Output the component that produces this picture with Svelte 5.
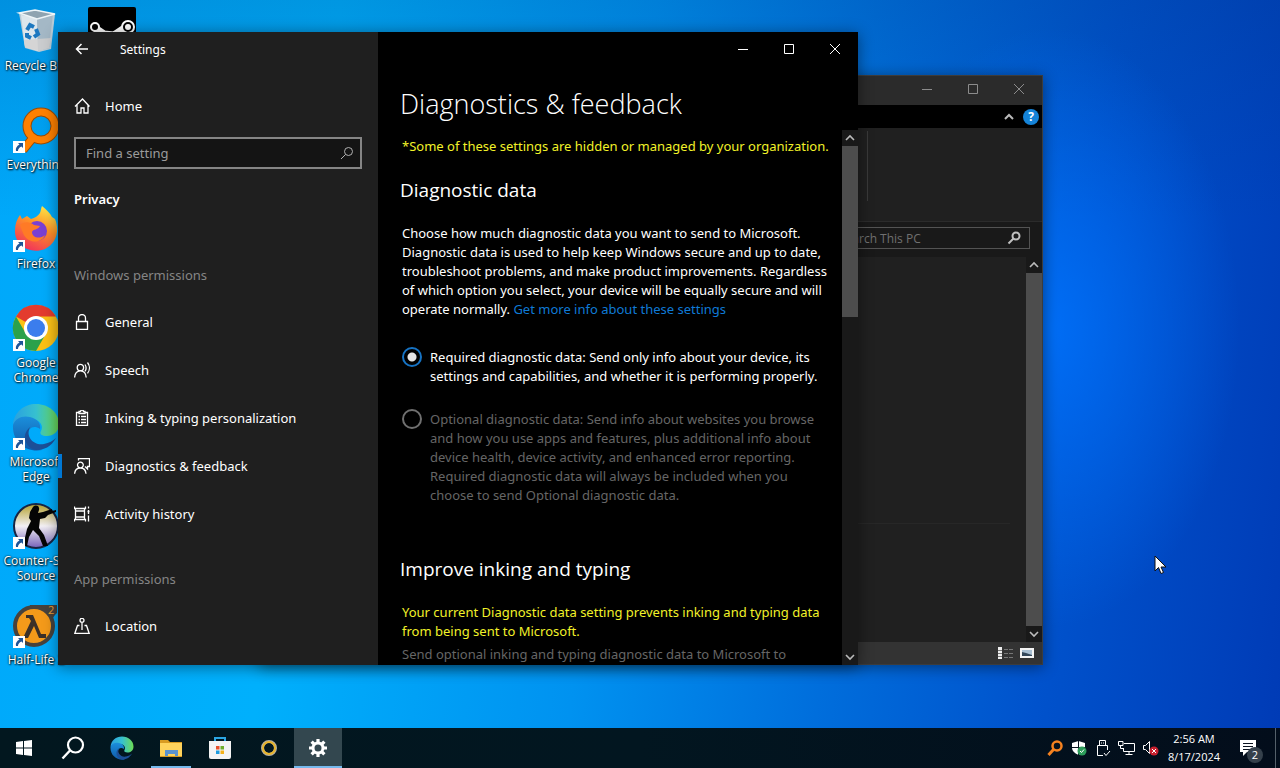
<script>
  let search = '';
  let level = 'required';
  let selected = 'Diagnostics & feedback';

  const shortcuts = [
    { id: 'bin', label: 'Recycle Bin', link: false },
    { id: 'everything', label: 'Everything', link: true },
    { id: 'firefox', label: 'Firefox', link: true },
    { id: 'chrome', label: 'Google\nChrome', link: true },
    { id: 'edge', label: 'Microsoft\nEdge', link: true },
    { id: 'cs', label: 'Counter-Str\nSource', link: true },
    { id: 'hl', label: 'Half-Life 2', link: true },
    { id: 'steam', label: 'Steam', link: false }
  ];

  const windowsItems = [
    {
      label: 'General',
      path: 'M2.5 7.5h11v8h-11zM4.5 7.5V4a3.5 3.5 0 0 1 7 0v3.5'
    },
    {
      label: 'Speech',
      path: 'M3.2 5.500a3.2 3.2 0 1 0 6.4 0a3.2 3.2 0 1 0-6.4 0M.6 15.500c.3-4.200 2.600-6.700 5.800-6.700s5.500 2.500 5.800 6.700M11 2.500c1.300 2 1.300 4.800 0 6.800M13.500.500c2.500 3.200 2.500 7.600 0 10.800'
    },
    {
      label: 'Inking & typing personalization',
      path: 'M5 2.500H2.500v13h11v-13H11M5 3.500v-2h1.500a1.500 1.500 0 0 1 3 0H11v2zM4.500 6.500h1.500M7 6.500h5M4.500 9.500h1.500M7 9.500h5M4.500 12.500h1.500M7 12.500h5'
    },
    {
      label: 'Diagnostics & feedback',
      path: 'M3.500 7a2.900 2.900 0 1 0 5.800 0a2.900 2.900 0 1 0-5.800 0M.600 15.800c.3-3.800 2.300-5.800 5.800-5.800s5.300 2 5.600 5.800M4.500 2.500v-2h11v8h-2v2.500L11 8.500'
    },
    {
      label: 'Activity history',
      path: 'M.500.500v2h11v-2M.500 15.500v-2h11v2M1.500 2.500v11M10.500 2.500v11M1.500 5h9M1.500 11h9M14.500.500v2M14.500 4v4M13.500 5.500h2M14.500 9.500v6'
    }
  ];

  const appItems = [
    {
      label: 'Location',
      path: 'M6 2.300a2 2 0 1 0 4 0a2 2 0 1 0-4 0M8 4.300V12M5.500 7.500h-2L.800 15.500h14.400l-2.700-8h-2'
    }
  ];

  const tasks = [
    { id: 'start', label: 'Start' },
    { id: 'search', label: 'Search' },
    { id: 'edge', label: 'Microsoft Edge' },
    { id: 'explorer', label: 'File Explorer', open: true },
    { id: 'store', label: 'Microsoft Store' },
    { id: 'ring', label: 'Cortana' },
    { id: 'settings', label: 'Settings', open: true, active: true }
  ];
</script>

{#snippet edgeLogo(uid)}
  <defs>
    <linearGradient id="{uid}-a" x1="0" y1="0" x2="1" y2="0">
      <stop offset="0" stop-color="#2aa0e0" />
      <stop offset=".5" stop-color="#36c0d0" />
      <stop offset="1" stop-color="#6ddc52" />
    </linearGradient>
    <linearGradient id="{uid}-b" x1="0" y1="0" x2="0" y2="1">
      <stop offset="0" stop-color="#1b8fdc" />
      <stop offset="1" stop-color="#1059a8" />
    </linearGradient>
  </defs>
  <path d="M1 22C2 9 12 1 24 1c13 0 23 9 23 20 0 8-6 12-12 12-5 0-8-2-6-5 3-5-1-12-10-12C9 16 2 19 1 22z" fill="url(#{uid}-a)" />
  <path d="M1 22c2-7 10-10 17-8 8 2 11 7 10 12-7-5-13 0-12 7 1 7 7 12 14 14C14 50 0 39 1 22z" fill="url(#{uid}-b)" />
  <path d="M18 24c-5 10 4 19 14 17 5-1 9-3 12-6-5 9-12 12-20 12-10-2-16-14-6-23z" fill="#1c4f97" />
{/snippet}

{#snippet shortcutIcon(id)}
  <svg viewBox="0 0 48 48" width="48" height="48" aria-hidden="true">
    {#if id === 'bin'}
      <path d="M7 6l16-3 20 4-4 35-12 3-14-4z" fill="#b9cbd6" />
      <path d="M9 8l16 3 1 33-13-4z" fill="#dce6ec" />
      <path d="M25 11l16-4-4 34-11 3z" fill="#a4b8c6" />
      <path d="M7 6l16-3 20 4-18 5z" fill="#8fa3b0" stroke="#eef4f7" stroke-width="1.500" />
      <path d="M12 33l27-2-2 10-10 3-14-4z" fill="#d3d1d0" opacity=".8" />
      <path d="M15 23l3-5 4 2M24 22l2 5-4 3M19 31l-4-2v-3" fill="none" stroke="#1c78c0" stroke-width="4" />
    {:else if id === 'everything'}
      <path d="M20 33L11 44" stroke="#9a4b05" stroke-width="9" />
      <circle cx="29" cy="20" r="14" fill="none" stroke="#9a4b05" stroke-width="9" />
      <path d="M20 33L11 44" stroke="#ff8000" stroke-width="7" />
      <circle cx="29" cy="20" r="14" fill="none" stroke="#ff8000" stroke-width="7" />
    {:else if id === 'firefox'}
      <defs>
        <linearGradient id="fox" x1=".8" y1="0" x2=".3" y2="1">
          <stop offset="0" stop-color="#fff04a" />
          <stop offset=".45" stop-color="#ff9128" />
          <stop offset="1" stop-color="#f0305c" />
        </linearGradient>
      </defs>
      <path d="M8 10l2 4 5-3 4 3c4-1 7-3 9-6 1-3 1-5 2-7 4 3 8 7 10 11l3 2c5 12 1 25-10 30C18 50 2 40 3 25c0-6 2-11 5-15z" fill="url(#fox)" />
      <circle cx="25" cy="26" r="10" fill="#7a3fd3" />
      <path d="M8 20c5-4 10-3 14 0l6 1c-2 4-7 3-8 6 0 5 7 8 13 3-3 9-18 9-22-2z" fill="#ff7a26" />
    {:else if id === 'chrome'}
      <circle cx="24" cy="24" r="23" fill="#fbc116" />
      <path d="M24 24L4 12.500A23 23 0 0 1 44 12.500H24z" fill="#e33b2e" />
      <path d="M4 12.500A23 23 0 0 0 24 47l10-17.500L14 30z" fill="#2ba14b" />
      <circle cx="24" cy="24" r="12" fill="#fff" />
      <circle cx="24" cy="24" r="9" fill="#3b7ded" />
    {:else if id === 'edge'}
      {@render edgeLogo('desk')}
    {:else if id === 'cs'}
      <defs>
        <linearGradient id="csbg" x1="0" y1="0" x2="0" y2="1">
          <stop offset="0" stop-color="#b3a02c" />
          <stop offset=".5" stop-color="#f3f0f4" />
          <stop offset="1" stop-color="#7560b8" />
        </linearGradient>
      </defs>
      <circle cx="24" cy="24" r="22" fill="url(#csbg)" stroke="#172544" stroke-width="2" />
      <path d="M21 5c3-3 7-1 6 3l-1 3 5-1 9-3v2l4-1v2l-8 3-3 3-5 1-1 9 5 7 4 11h-5l-4-10-6-6-4 7-2 9h-6l1-3 2-1 3-13 4-8-2-3 1-6z" fill="#050505" />
    {:else if id === 'hl'}
      <path d="M18 4h27v8c-4 3-6 8-5 16l-22 8z" fill="#47423d" />
      <circle cx="22" cy="25" r="19" fill="#f49a1a" stroke="#47423d" stroke-width="4" />
      <path d="M14 14h7l8 19h5v4h-7l-5-12-6 12h-5l8-17-2-3h-3z" fill="#3c3028" />
      <text x="36" y="13" font-size="11" fill="#f0a030">2</text>
    {:else if id === 'steam'}
      <rect width="48" height="48" rx="2" fill="#000" />
      <path d="M7 21l9 6 10 1 12-8" stroke="#fff" stroke-width="7" fill="none" />
      <circle cx="7" cy="20" r="4" fill="#000" stroke="#fff" stroke-width="2" />
      <circle cx="40" cy="20" r="6" fill="#000" stroke="#fff" stroke-width="2" />
      <circle cx="40" cy="20" r="3" fill="#fff" />
    {/if}
  </svg>
{/snippet}

{#snippet taskIcon(id)}
  <svg viewBox="0 0 24 24" width="24" height="24" aria-hidden="true">
    {#if id === 'start'}
      <path d="M4 6l7-1v6.500H4zM12 5l8-1v7.500h-8zM4 12.500h7V19l-7-1zM12 12.500h8V20l-8-1z" fill="#fff" />
    {:else if id === 'search'}
      <circle cx="14.500" cy="9" r="7.500" fill="none" stroke="#fff" stroke-width="2.200" />
      <path d="M9 14.500L1.500 22.500" stroke="#fff" stroke-width="2.400" />
    {:else if id === 'edge'}
      <svg viewBox="0 0 48 48" width="24" height="24">{@render edgeLogo('task')}</svg>
    {:else if id === 'explorer'}
      <path d="M1 4h8l2 2h12v15H1z" fill="#d99b22" />
      <path d="M1 7h22v13H1z" fill="#ffd35c" />
      <path d="M6 20v-6h13v6h-3v-2H9v2z" fill="#5b93d0" />
    {:else if id === 'store'}
      <path d="M7 7V2h10v5" fill="none" stroke="#2ba6e3" stroke-width="2" />
      <path d="M1 5h22v16q0 2-2 2H3q-2 0-2-2z" fill="#f4f4f4" />
      <path d="M8 10h3.500v3.500H8z" fill="#e8502b" />
      <path d="M12.500 10H16v3.500h-3.500z" fill="#6fae2b" />
      <path d="M8 14.500h3.500V18H8z" fill="#1e9ce0" />
      <path d="M12.500 14.500H16V18h-3.500z" fill="#f5b21a" />
    {:else if id === 'ring'}
      <circle cx="12" cy="12" r="6.500" fill="none" stroke="#b5b0a4" stroke-width="3" />
      <circle cx="12" cy="12" r="6" fill="none" stroke="#e8b42a" stroke-width="2" />
    {:else}
      <circle cx="12" cy="12" r="5" fill="none" stroke="#fff" stroke-width="3" />
      <path d="M12 3v4M12 17v4M3 12h4M17 12h4M5.600 5.600l2.900 2.900M15.500 15.500l2.900 2.900M5.600 18.400l2.900-2.900M15.500 8.500l2.900-2.900" stroke="#fff" stroke-width="3.200" />
    {/if}
  </svg>
{/snippet}

{#snippet captionButtons()}
  <div class="caption-buttons">
    <button aria-label="Minimize"><svg width="12" height="12"><path d="M1 6.500h10" /></svg></button>
    <button aria-label="Maximize"><svg width="12" height="12"><path d="M1.500 1.500h9v9h-9z" /></svg></button>
    <button aria-label="Close"><svg width="12" height="12"><path d="M1 1l10 10M11 1L1 11" /></svg></button>
  </div>
{/snippet}

{#snippet chevron(up)}
  <svg width="10" height="8" aria-hidden="true"><path d={up ? 'M1 6l4-4 4 4' : 'M1 2l4 4 4-4'} /></svg>
{/snippet}

{#snippet navList(items)}
  <ul class="nav-list">
    {#each items as item}
      <li>
        <button class="nav-item" class:selected={item.label === selected} on:click={() => (selected = item.label)}>
          <svg width="16" height="16" viewBox="0 0 16 16" aria-hidden="true"><path d={item.path} /></svg>
          {item.label}
        </button>
      </li>
    {/each}
  </ul>
{/snippet}

<div class="screen">
  <main class="desktop">
    <div class="shortcuts">
      {#each shortcuts as shortcut}
        <button class="shortcut">
          <span class="shortcut-icon">
            {@render shortcutIcon(shortcut.id)}
            {#if shortcut.link}
              <svg class="link-badge" width="12" height="12" aria-hidden="true">
                <rect width="12" height="12" fill="#fff" />
                <path d="M5 2h5v5L8.500 5.500Q5 7 5 10H3Q2 6 6.500 3.500z" fill="#1f5598" />
              </svg>
            {/if}
          </span>
          <span class="shortcut-label">{shortcut.label}</span>
        </button>
      {/each}
    </div>

    <section class="window explorer" aria-label="This PC">
      <header class="explorer-title">{@render captionButtons()}</header>
      <div class="explorer-tabs">
        <button aria-label="Minimize the Ribbon">{@render chevron(true)}</button>
        <button class="help" aria-label="Help">?</button>
      </div>
      <div class="ribbon"><span class="ribbon-divider"></span></div>
      <div class="address-row">
        <label class="pc-search">
          <input type="text" placeholder="Search This PC" aria-label="Search This PC" />
          <svg width="14" height="14" aria-hidden="true"><circle cx="9" cy="5" r="3.500" /><path d="M6.500 7.500L1.500 12.500" /></svg>
        </label>
      </div>
      <div class="explorer-body">
        <div class="files"><hr /></div>
        <div class="scrollbar">
          <button aria-label="Scroll up">{@render chevron(true)}</button>
          <div class="thumb"></div>
          <button aria-label="Scroll down">{@render chevron(false)}</button>
        </div>
      </div>
      <footer class="status">
        <button aria-label="Details view">
          <svg width="17" height="14">
            <path d="M1 1h4v12H1z" fill="#eee" />
            <path d="M1 4.500h4M1 7.500h4M1 10.500h4" stroke="#777" />
            <path d="M7 3.500h4M12 3.500h4M7 7.500h4M12 7.500h4M7 11.500h4M12 11.500h4" stroke="#777" />
          </svg>
        </button>
        <button aria-label="Large icons view">
          <svg width="14" height="12">
            <path d="M0 1h14v10H0z" fill="#f4f4f4" />
            <path d="M2 3h10v6H2z" fill="#a9bfd2" />
            <path d="M2 5l4 1 6 2v1H2z" fill="#33475a" />
          </svg>
        </button>
      </footer>
    </section>

    <section class="window settings" aria-label="Settings">
      <aside class="sidebar">
        <header class="settings-title">
          <button class="back" aria-label="Back"><svg width="14" height="12"><path d="M13 6H1.500M6.500 1l-5 5 5 5" /></svg></button>
          <span>Settings</span>
        </header>
        <button class="nav-item">
          <svg width="16" height="16" viewBox="0 0 16 16" aria-hidden="true">
            <path d="M1 8.500L8.500 1l7 7.500M3 7v8h4v-5h3v5h4V7" />
          </svg>
          Home
        </button>
        <label class="find">
          <input type="text" placeholder="Find a setting" aria-label="Find a setting" bind:value={search} />
          <svg width="14" height="14" aria-hidden="true"><circle cx="8.500" cy="5.500" r="4" /><path d="M5.500 8.500L1 13" /></svg>
        </label>
        <h2 class="category">Privacy</h2>
        <h3 class="group">Windows permissions</h3>
        {@render navList(windowsItems)}
        <h3 class="group app-group">App permissions</h3>
        {@render navList(appItems)}
      </aside>

      <div class="page">
        <header class="page-title">{@render captionButtons()}</header>
        <h1>Diagnostics &amp; feedback</h1>
        <div class="page-scroll">
          <div class="page-content">
            <p class="notice">*Some of these settings are hidden or managed by your organization.</p>
            <h2>Diagnostic data</h2>
            <p class="intro">
              Choose how much diagnostic data you want to send to Microsoft. Diagnostic data is used to help keep
              Windows secure and up to date, troubleshoot problems, and make product improvements. Regardless of
              which option you select, your device will be equally secure and will operate normally.
              <a href="#info">Get more info about these settings</a>
            </p>
            <label class="option">
              <input type="radio" name="level" value="required" bind:group={level} />
              <span>Required diagnostic data: Send only info about your device, its settings and capabilities, and whether it is performing properly.</span>
            </label>
            <label class="option disabled">
              <input type="radio" name="level" value="optional" bind:group={level} disabled />
              <span>Optional diagnostic data: Send info about websites you browse and how you use apps and features, plus additional info about device health, device activity, and enhanced error reporting. Required diagnostic data will always be included when you choose to send Optional diagnostic data.</span>
            </label>
            <h2 class="inking">Improve inking and typing</h2>
            <p class="notice">Your current Diagnostic data setting prevents inking and typing data from being sent to Microsoft.</p>
            <p class="faded">Send optional inking and typing diagnostic data to Microsoft to</p>
          </div>
          <div class="scrollbar">
            <button aria-label="Scroll up">{@render chevron(true)}</button>
            <div class="thumb short"></div>
            <button class="bottom" aria-label="Scroll down">{@render chevron(false)}</button>
          </div>
        </div>
      </div>
    </section>

    <svg class="pointer" width="13" height="20" aria-hidden="true">
      <path d="M1 1v15l3.500-3.500L7 18.500l2.500-1L7 12h5z" fill="#fff" stroke="#111" />
    </svg>
  </main>

  <footer class="taskbar">
    <nav class="tasks">
      {#each tasks as task}
        <button class="task" class:open={task.open} class:active={task.active} aria-label={task.label}>
          {@render taskIcon(task.id)}
        </button>
      {/each}
    </nav>
    <div class="tray">
      <button aria-label="Everything">
        <svg width="16" height="16"><circle cx="10" cy="6" r="4.500" fill="none" stroke="#f58220" stroke-width="2.500" /><path d="M6.500 9.500L1.500 15" stroke="#f58220" stroke-width="3" /></svg>
      </button>
      <button aria-label="Windows Security">
        <svg width="16" height="16">
          <path d="M7.500 1L14 3v5q0 4-6.500 7Q1 12 1 8V3z" fill="#fff" />
          <path d="M7.500 1v14M1 7.500h13" stroke="#0a1220" />
          <circle cx="11" cy="11" r="4.500" fill="#2c9c5a" />
          <path d="M9 11l1.500 1.500L13 9.500" stroke="#fff" fill="none" />
        </svg>
      </button>
      <button aria-label="Safely Remove Hardware">
        <svg width="16" height="18" class="line"><path d="M4.500 6.500v-5h6v5M8 16.500H2.500v-10h10V11M6 4h1M8 4h1M9 14l2 2.500 4-4.500" /></svg>
      </button>
      <button aria-label="Network">
        <svg width="18" height="16" class="line"><path d="M6 3.500h10.500v8H5.500V8M11 11.500v3M7.500 14.500h7M.500 1.500h4.500v4H.500zM2.500 5.500v3H5" /></svg>
      </button>
      <button aria-label="Speakers, muted">
        <svg width="18" height="16" class="line">
          <path d="M1.500 5.500h2l4-4v12l-4-4h-2z" />
          <circle cx="12" cy="11" r="4.500" fill="#c8202f" stroke="none" />
          <path d="M10 9l4 4M14 9l-4 4" />
        </svg>
      </button>
      <button class="clock"><span>2:56 AM</span><span>8/17/2024</span></button>
      <button class="notifications" aria-label="Notifications">
        <svg width="18" height="18"><path d="M1 1h16v12H8l-4 4v-4H1z" fill="#fff" /><path d="M4 4.500h10M4 7.500h10M4 10.500h7" stroke="#0b1320" /></svg>
        <span class="count">2</span>
      </button>
      <button class="show-desktop" aria-label="Show desktop"></button>
    </div>
  </footer>
</div>

<style>
  :global(body) {
    overflow: hidden;
  }

  .screen {
    display: flex;
    flex-direction: column;
    height: 100vh;
    font-family: 'Noto Sans', 'Open Sans', sans-serif;
    font-size: 13px;
    color: #fff;
  }

  button {
    padding: 0;
    border: none;
    background: none;
    color: inherit;
    font: inherit;
    display: flex;
    align-items: center;
    justify-content: center;
  }

  h1,
  h2,
  h3,
  p,
  ul {
    margin: 0;
    padding: 0;
  }

  .desktop {
    position: relative;
    flex: 1;
    min-height: 0;
    overflow: hidden;
    background:
      radial-gradient(ellipse 190px 300px at 82% 45%, rgba(0, 115, 255, 0.8), rgba(0, 90, 230, 0) 100%),
      linear-gradient(180deg, rgba(0, 50, 120, 0.2), rgba(0, 50, 120, 0) 30%),
      linear-gradient(97deg, #00a8fa 0%, #00b0fc 25%, #0092f0 48%, #006edc 66%, #0052cc 82%, #003bb6 100%);
  }

  .shortcuts {
    display: grid;
    grid-auto-flow: column;
    grid-template-rows: repeat(7, 99px);
    grid-auto-columns: 72px;
    column-gap: 4px;
    justify-content: start;
    padding-top: 7px;
  }

  .shortcut {
    flex-direction: column;
    justify-content: flex-start;
    gap: 3px;
    font-family: 'Open Sans', sans-serif;
    font-size: 12px;
    line-height: 15px;
  }

  .shortcut-icon {
    position: relative;
    height: 48px;
  }

  .link-badge {
    position: absolute;
    left: 1px;
    bottom: 1px;
  }

  .shortcut-label {
    white-space: pre;
    text-shadow: 1px 1px 2px #000, 0 0 2px #000;
  }

  .window {
    position: absolute;
    box-shadow: 0 2px 14px rgba(0, 0, 0, 0.45);
  }

  .caption-buttons {
    display: flex;
    justify-content: flex-end;
  }

  .caption-buttons button {
    width: 46px;
    height: 34px;
  }

  .caption-buttons path,
  .back path,
  .nav-item path,
  .line path {
    fill: none;
    stroke: #fff;
  }

  .nav-item path {
    stroke-width: 1.3;
  }

  .back path {
    stroke-width: 1.5;
  }

  .scrollbar {
    display: flex;
    flex-direction: column;
    width: 16px;
    background: #191919;
  }

  .scrollbar button {
    height: 16px;
    flex: none;
  }

  .scrollbar path,
  .explorer-tabs path {
    fill: none;
    stroke: #bbb;
    stroke-width: 1.6;
  }

  .explorer-tabs path {
    stroke-width: 2;
  }

  .thumb {
    flex: 1;
    background: #4d4d4d;
  }

  .thumb.short {
    flex: none;
    height: 32%;
  }

  .bottom {
    margin-top: auto;
  }

  /* File Explorer */
  .explorer {
    left: 259px;
    top: 75px;
    width: 784px;
    height: 590px;
    box-sizing: border-box;
    border: 1px solid #3c3c3c;
    display: flex;
    flex-direction: column;
    background: #202020;
  }

  .explorer-title {
    background: #2b2b2b;
    height: 29px;
  }

  .explorer-title path {
    stroke: #8c8c8c;
  }

  .explorer-title button {
    height: 26px;
  }

  .explorer-tabs {
    display: flex;
    justify-content: flex-end;
    align-items: center;
    gap: 9px;
    height: 23px;
    padding-right: 3px;
    background: #000;
  }

  .help {
    width: 16px;
    height: 16px;
    border-radius: 50%;
    background: #1583d8;
    font-size: 12px;
    font-weight: 700;
  }

  .ribbon {
    display: flex;
    justify-content: flex-end;
    height: 93px;
    padding-right: 174px;
    border-bottom: 1px solid #2b2b2b;
  }

  .ribbon-divider {
    width: 1px;
    height: 70px;
    margin-top: 3px;
    background: #3a3a3a;
  }

  .address-row {
    display: flex;
    justify-content: flex-end;
    padding: 5px 12px 8px;
    background: #191919;
  }

  .pc-search {
    display: flex;
    align-items: center;
    width: 200px;
    height: 22px;
    box-sizing: border-box;
    padding: 0 8px;
    border: 1px solid #535353;
  }

  .pc-search input {
    flex: 1;
    min-width: 0;
    border: none;
    background: none;
    padding: 0;
    font: 12px 'Open Sans', sans-serif;
    color: #fff;
  }

  .pc-search input::placeholder {
    color: #707070;
  }

  .pc-search svg {
    fill: none;
    stroke: #c0c0c0;
    stroke-width: 2;
  }

  .explorer-body {
    display: flex;
    flex: 1;
    min-height: 0;
  }

  .files {
    display: flex;
    flex: 1;
    align-items: flex-end;
    padding: 0 16px 118px;
  }

  .files hr {
    flex: 1;
    border: none;
    border-top: 1px solid #272727;
    margin: 0;
  }

  .status {
    display: flex;
    justify-content: flex-end;
    gap: 6px;
    height: 22px;
    padding-right: 8px;
    background: #333;
  }

  /* Settings */
  .settings {
    left: 58px;
    top: 32px;
    width: 800px;
    height: 633px;
    display: flex;
    overflow: hidden;
    background: #000;
  }

  .sidebar {
    width: 320px;
    flex: none;
    background: #1f1f1f;
  }

  .settings-title {
    display: flex;
    align-items: center;
    gap: 31px;
    height: 34px;
    padding-left: 17px;
    margin-bottom: 16px;
    font-size: 12px;
  }

  .nav-list {
    list-style: none;
  }

  .nav-item {
    width: 100%;
    height: 48px;
    padding-left: 16px;
    gap: 15px;
    justify-content: flex-start;
    font-size: 13px;
    position: relative;
  }

  .nav-item.selected::before {
    content: '';
    position: absolute;
    left: 0;
    top: 12px;
    width: 4px;
    height: 24px;
    background: #0078d4;
  }

  .find {
    display: flex;
    align-items: center;
    height: 32px;
    box-sizing: border-box;
    margin: 7px 16px 14px;
    padding: 0 6px 0 10px;
    border: 2px solid #858585;
    background: #141414;
  }

  .find input {
    flex: 1;
    min-width: 0;
    padding: 0;
    border: none;
    background: none;
    font: 13px 'Noto Sans', sans-serif;
    color: #fff;
  }

  .find input::placeholder {
    color: #9b9b9b;
  }

  .find svg {
    fill: none;
    stroke: #b0b0b0;
  }

  .category {
    padding-left: 16px;
    font-size: 13px;
    font-weight: 600;
    line-height: 32px;
  }

  .group {
    padding-left: 16px;
    margin: 44px 0 7px;
    font-size: 13px;
    font-weight: 400;
    line-height: 32px;
    color: #858585;
  }

  .app-group {
    margin-top: 25px;
  }

  .page {
    flex: 1;
    min-width: 0;
    display: flex;
    flex-direction: column;
  }

  .page-title {
    height: 34px;
  }

  h1 {
    padding: 20px 0 8px 22px;
    font-family: 'Open Sans', sans-serif;
    font-size: 27px;
    font-weight: 300;
    line-height: 36px;
  }

  .page-scroll {
    display: flex;
    flex: 1;
    min-height: 0;
  }

  .page-content {
    flex: 1;
    min-width: 0;
    overflow: hidden;
    padding: 7px 0 0 24px;
    line-height: 19px;
  }

  .page-content h2 {
    margin: 20px 0 20px -2px;
    font-family: 'Open Sans', sans-serif;
    font-size: 19px;
    font-weight: 400;
    line-height: 28px;
  }

  .page-content h2.inking {
    margin: 50px 0 20px -2px;
  }

  .notice {
    color: #f2f229;
  }

  .intro {
    margin-bottom: 29px;
  }

  .intro a {
    color: #0f7ad6;
    text-decoration: none;
  }

  .option {
    display: flex;
    gap: 8px;
    margin-bottom: 24px;
    padding-right: 16px;
  }

  .option input {
    appearance: none;
    flex: none;
    width: 20px;
    height: 20px;
    margin: -1px 0 0;
    border: 2px solid #707070;
    border-radius: 50%;
  }

  .option input:checked {
    border-color: #1673c4;
    background: radial-gradient(circle, #e4e4e4 4px, transparent 5px);
  }

  .option.disabled,
  .faded {
    color: #666;
  }

  .faded {
    margin-top: 4px;
  }

  .pointer {
    position: absolute;
    left: 1154px;
    top: 555px;
  }

  /* Taskbar */
  .taskbar {
    display: flex;
    justify-content: space-between;
    height: 40px;
    background: linear-gradient(90deg, #02171f, #021620 50%, #030d1b);
  }

  .tasks {
    display: flex;
    gap: 1px;
  }

  .task {
    position: relative;
    width: 48px;
  }

  .task.open::after {
    content: '';
    position: absolute;
    bottom: 0;
    width: 40px;
    height: 2px;
    background: #76b9ed;
  }

  .task.active {
    background: #33474f;
  }

  .task.active::after {
    width: 48px;
  }

  .tray {
    display: flex;
    font-family: 'Open Sans', sans-serif;
  }

  .tray button {
    width: 24px;
  }

  .tray .clock {
    width: 62px;
    flex-direction: column;
    font-size: 11px;
    line-height: 18px;
  }

  .tray .notifications {
    position: relative;
    width: 46px;
    margin-right: 4px;
  }

  .count {
    position: absolute;
    left: 22px;
    bottom: 5px;
    width: 16px;
    height: 16px;
    border-radius: 50%;
    background: #35404b;
    font-size: 11px;
    line-height: 16px;
  }

  .tray .show-desktop {
    width: 5px;
    border-left: 1px solid #55606a;
  }
</style>
